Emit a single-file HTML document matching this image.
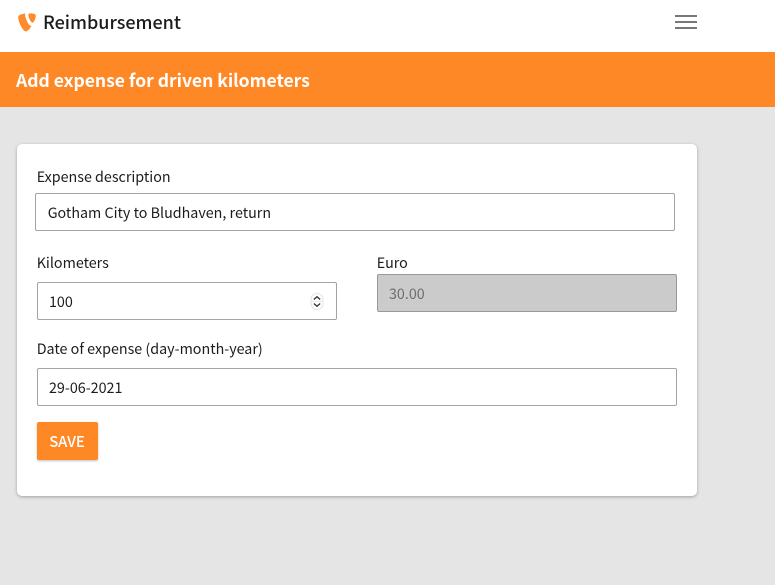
<!DOCTYPE html>
<html>
<head>
<meta charset="utf-8">
<style>
html,body{margin:0;padding:0}
body{width:775px;height:585px;position:relative;overflow:hidden;background:#e5e5e5;font-family:"Noto Sans CJK JP","Liberation Sans",sans-serif;color:#1c1c1c;font-size:14.3px}
div{position:absolute;box-sizing:border-box}
.t{white-space:nowrap;line-height:20px}
.in{background:#fff;border:1px solid #a3a3a3;border-radius:2px}
</style>
</head>
<body>
<div style="left:0;top:0;width:775px;height:52px;background:#fff"></div>
<svg style="position:absolute;left:18px;top:13px" width="18" height="19" viewBox="0 0 18 19"><path d="M13.6 12.6c-.3.1-.5.1-.8.1-2.300 0-5.700-8-5.700-10.700 0-1 .2-1.300.6-1.600C4.900.7 1.600 1.600.5 3 .3 3.300.2 3.800.2 4.400c0 4.200 4.500 14 7.700 14 1.500 0 4-2.400 5.700-5.800zM12.100.4c3 0 5.700.5 5.700 2.100 0 3.300-2.100 7.200-3.100 7.200-1.900 0-4.300-5.100-4.300-7.700 0-1.200.5-1.600 1.700-1.600z" fill="#ff8a2a"/></svg>
<div class="t" style="left:43px;top:12px;font-size:18px;font-weight:500;color:#1c1c1c">Reimbursement</div>
<div style="left:675px;top:15px;width:22px;height:2px;background:#777"></div>
<div style="left:675px;top:21px;width:22px;height:2px;background:#777"></div>
<div style="left:675px;top:27px;width:22px;height:2px;background:#777"></div>
<div style="left:0;top:52px;width:775px;height:55px;background:#ff8826"></div>
<div class="t" style="left:16px;top:71px;font-size:17.500px;font-weight:700;color:#fff">Add expense for driven kilometers</div>

<div style="left:17px;top:144px;width:680px;height:352px;background:#fff;border-radius:5px;box-shadow:0 1px 3px rgba(0,0,0,.3)"></div>

<div class="t" style="left:36.700px;top:167px">Expense description</div>
<div class="in" style="left:35px;top:193px;width:640px;height:38px"></div>
<div class="t" style="left:47.700px;top:203px">Gotham City to Bludhaven, return</div>

<div class="t" style="left:36.700px;top:253px">Kilometers</div>
<div class="in" style="left:37px;top:282px;width:300px;height:38px"></div>
<div class="t" style="left:49px;top:292px">100</div>
<svg style="position:absolute;left:309.500px;top:292px" width="14" height="19" viewBox="0 0 14 19"><rect x="1" y="1.500" width="12" height="16" rx="6" fill="#fff" stroke="#e3e3e3"/><path d="M1 9.500h12" stroke="#e8e8e8"/><path d="M3.800 7.500l3.200-2.800 3.200 2.800M3.800 11.500l3.200 2.800 3.200-2.800" fill="none" stroke="#333" stroke-width="1.300"/></svg>

<div class="t" style="left:376.700px;top:253px">Euro</div>
<div class="in" style="left:377px;top:274px;width:300px;height:38px;background:#cbcbcb;border-color:#999"></div>
<div class="t" style="left:389px;top:284px;color:#6e6e6e">30.00</div>

<div class="t" style="left:36.700px;top:339px">Date of expense (day-month-year)</div>
<div class="in" style="left:37px;top:368px;width:640px;height:38px"></div>
<div class="t" style="left:49px;top:378px">29-06-2021</div>

<div style="left:37px;top:422px;width:61px;height:38px;background:#ff8826;border-radius:2px;box-shadow:0 1px 2px rgba(0,0,0,.25)"></div>
<div class="t" style="left:36.500px;top:432px;width:61px;text-align:center;color:#fff;font-weight:500;font-size:14.800px">SAVE</div>
</body>
</html>
